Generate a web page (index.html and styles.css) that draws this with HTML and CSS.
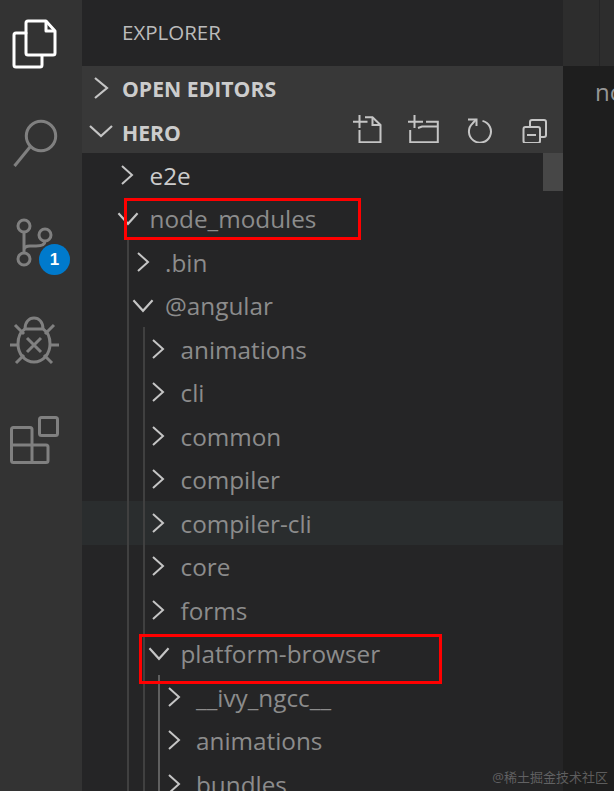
FILE: index.html
```html
<!DOCTYPE html>
<html lang="en">
<head>
    <meta charset="UTF-8">
    <meta name="viewport" content="width=device-width, initial-scale=1.0">
    <title>Explorer</title>
    <link rel="stylesheet" href="styles.css">
</head>
<body>
    <div class="window">
        <!-- Activity bar -->
        <nav class="activity">
            <svg class="act-icon act-files" viewBox="0 0 46 50" fill="none" stroke-linejoin="round" stroke-linecap="round">
                <path d="M14 14H4a2 2 0 0 0-2 2v30a2 2 0 0 0 2 2h24a2 2 0 0 0 2-2v-9"/>
                <path d="M16 2h18l9 10v22a2 2 0 0 1-2 2H16a2 2 0 0 1-2-2V4a2 2 0 0 1 2-2z"/>
                <path d="M34 3v9h8"/>
            </svg>
            <svg class="act-icon act-search" viewBox="0 0 48 50" fill="none">
                <circle cx="29" cy="18" r="14.7"/>
                <path d="M18 29 2.5 48"/>
            </svg>
            <div class="act-scm">
                <svg class="act-icon" viewBox="0 0 40 50" fill="none">
                    <circle cx="8" cy="8" r="6"/>
                    <circle cx="8" cy="41" r="6"/>
                    <circle cx="29" cy="17" r="6"/>
                    <path d="M8 14v21M8 32c0-3 2-4 6-4h6c5 0 9-1 9-5"/>
                </svg>
                <span class="badge">1</span>
            </div>
            <svg class="act-icon act-debug" viewBox="0 0 50 50" fill="none">
                <path d="M15 13C15 6 19 2 24 2s9 4 9 11"/>
                <path d="M15 13h18c5 3 7 9 7 15 0 10-7 18-16 18S8 38 8 28c0-6 2-12 7-15z"/>
                <path d="M17 22l14 14M31 22 17 36"/>
                <path d="M5 9l9 9M44 9l-9 9M0 29h8M40 29h9M6 47l8-8M42 47l-8-8"/>
            </svg>
            <svg class="act-icon act-ext" viewBox="0 0 50 50" fill="none" stroke-linejoin="round">
                <rect x="29.5" y="2.5" width="18" height="18" rx="2"/>
                <path d="M22 47.5V14.5a2 2 0 0 0-2-2H3.5a2 2 0 0 0-2 2v31a2 2 0 0 0 2 2H36a2 2 0 0 0 2-2V32a2 2 0 0 0-2-2H2"/>
            </svg>
        </nav>

        <!-- Sidebar -->
        <aside class="sidebar">
            <div class="side-title">EXPLORER</div>
            <div class="section section-closed">
                <svg class="chev-head" viewBox="0 0 16 24"><path d="M2 2l12 10-12 10"/></svg>
                <span class="section-name">OPEN EDITORS</span>
            </div>
            <div class="section section-open">
                <svg class="chev-head" viewBox="0 0 24 16"><path d="M1 3l11 10 11-10"/></svg>
                <span class="section-name">HERO</span>
                <div class="actions">
                    <span class="action"><svg viewBox="0 0 30 28" fill="none"><path d="M1 6.700h14.500M7.500 0v13M7.500 15v12.300h21V10L20.500 2.300H13"/><path d="M20.500 2.500V10h8"/></svg></span>
                    <span class="action"><svg viewBox="0 0 32 28" fill="none"><path d="M1 6.700h15M7.500 0v13M3.200 15v12.300h27.600V6.700H19M11 13l4-1.500h15.800"/></svg></span>
                    <span class="action"><svg viewBox="0 0 26 28" fill="none"><path d="M16.500 5.900A11 11 0 1 1 6.500 8.500L10 4.500"/><path d="M2 4.500h8.500V11"/></svg></span>
                    <span class="action"><svg viewBox="0 0 26 28" fill="none"><path d="M8 11V7a2 2 0 0 1 2-2h12a2 2 0 0 1 2 2v13a2 2 0 0 1-2 2h-4"/><rect x="1.500" y="12" width="16.500" height="16" rx="2"/><path d="M5 20h9"/></svg></span>
                </div>
            </div>

            <div class="tree">
                <div class="row bright"><svg class="chev" viewBox="0 0 16 24"><path d="M3 3l10 9-10 9"/></svg><span class="name">e2e</span></div>
                <div class="row"><svg class="chev chev-open" viewBox="0 0 24 16"><path d="M3 3l9 10 9-10"/></svg><span class="name">node_modules</span></div>
                <div class="row"><span class="guide"></span><svg class="chev" viewBox="0 0 16 24"><path d="M3 3l10 9-10 9"/></svg><span class="name">.bin</span></div>
                <div class="row"><span class="guide"></span><svg class="chev chev-open" viewBox="0 0 24 16"><path d="M3 3l9 10 9-10"/></svg><span class="name">@angular</span></div>
                <div class="row"><span class="guide"></span><span class="guide"></span><svg class="chev" viewBox="0 0 16 24"><path d="M3 3l10 9-10 9"/></svg><span class="name">animations</span></div>
                <div class="row"><span class="guide"></span><span class="guide"></span><svg class="chev" viewBox="0 0 16 24"><path d="M3 3l10 9-10 9"/></svg><span class="name">cli</span></div>
                <div class="row"><span class="guide"></span><span class="guide"></span><svg class="chev" viewBox="0 0 16 24"><path d="M3 3l10 9-10 9"/></svg><span class="name">common</span></div>
                <div class="row"><span class="guide"></span><span class="guide"></span><svg class="chev" viewBox="0 0 16 24"><path d="M3 3l10 9-10 9"/></svg><span class="name">compiler</span></div>
                <div class="row hover"><span class="guide"></span><span class="guide"></span><svg class="chev" viewBox="0 0 16 24"><path d="M3 3l10 9-10 9"/></svg><span class="name">compiler-cli</span></div>
                <div class="row"><span class="guide"></span><span class="guide"></span><svg class="chev" viewBox="0 0 16 24"><path d="M3 3l10 9-10 9"/></svg><span class="name">core</span></div>
                <div class="row"><span class="guide"></span><span class="guide"></span><svg class="chev" viewBox="0 0 16 24"><path d="M3 3l10 9-10 9"/></svg><span class="name">forms</span></div>
                <div class="row"><span class="guide"></span><span class="guide"></span><svg class="chev chev-open" viewBox="0 0 24 16"><path d="M3 3l9 10 9-10"/></svg><span class="name">platform-browser</span></div>
                <div class="row"><span class="guide"></span><span class="guide"></span><span class="guide guide-active"></span><svg class="chev" viewBox="0 0 16 24"><path d="M3 3l10 9-10 9"/></svg><span class="name">__ivy_ngcc__</span></div>
                <div class="row"><span class="guide"></span><span class="guide"></span><span class="guide guide-active"></span><svg class="chev" viewBox="0 0 16 24"><path d="M3 3l10 9-10 9"/></svg><span class="name">animations</span></div>
                <div class="row"><span class="guide"></span><span class="guide"></span><span class="guide guide-active"></span><svg class="chev" viewBox="0 0 16 24"><path d="M3 3l10 9-10 9"/></svg><span class="name">bundles</span></div>
                <div class="mark mark-node"></div>
                <div class="mark mark-platform"></div>
                <div class="scrollbar"></div>
            </div>
        </aside>

        <!-- Editor -->
        <main class="editor">
            <div class="tabs"><div class="tab"></div></div>
            <div class="crumb">no</div>
        </main>
    </div>
    <div class="watermark">@稀土掘金技术社区</div>
</body>
</html>
```

FILE: styles.css
```css
html, body {
    margin: 0;
    padding: 0;
    height: 100%;
    overflow: hidden;
}
body {
    font-family: "Open Sans", "Noto Sans CJK SC", sans-serif;
    background-color: #252526;
}
.window {
    display: flex;
    width: 614px;
    height: 791px;
    overflow: hidden;
}

/* Activity bar */
.activity {
    flex: 0 0 82px;
    background-color: #333333;
    display: flex;
    flex-direction: column;
    align-items: flex-start;
}
.act-icon {
    display: block;
    flex: none;
    stroke: #808080;
    stroke-width: 3;
}
.act-files {
    width: 46px;
    height: 50px;
    margin: 19px 0 0 12px;
    stroke: #ffffff;
}
.act-search {
    width: 48px;
    height: 50px;
    margin: 49px 0 0 12px;
}
.act-scm {
    position: relative;
    flex: none;
    margin: 50px 0 0 16px;
    width: 40px;
    height: 50px;
}
.act-scm .act-icon {
    width: 40px;
    height: 50px;
}
.badge {
    position: absolute;
    left: 23px;
    top: 26px;
    width: 31px;
    height: 31px;
    border-radius: 50%;
    background-color: #007acc;
    color: #ffffff;
    font-family: "Liberation Sans", sans-serif;
    font-size: 17px;
    font-weight: bold;
    line-height: 31px;
    text-align: center;
}
.act-debug {
    width: 50px;
    height: 50px;
    margin: 48px 0 0 10px;
}
.act-ext {
    width: 50px;
    height: 50px;
    margin: 49px 0 0 10px;
}

/* Sidebar */
.sidebar {
    flex: 0 0 481px;
    background-color: #252526;
    display: flex;
    flex-direction: column;
}
.side-title {
    height: 66px;
    line-height: 64px;
    padding-left: 40px;
    font-size: 20.5px;
    color: #bbbbbb;
    flex: none;
}
.section {
    height: 43.5px;
    background-color: #383838;
    color: #cccccc;
    font-size: 21.2px;
    font-weight: bold;
    display: flex;
    align-items: center;
    flex: none;
}
.section-name {
    padding-top: 2px;
}
.chev-head {
    display: block;
    flex: none;
    fill: none;
    stroke: #c5c5c5;
    stroke-width: 2.2;
}
.section-closed {
    padding-left: 11px;
}
.section-closed .chev-head {
    width: 16px;
    height: 24px;
    margin-right: 13px;
}
.section-open {
    padding-left: 7px;
}
.section-open .chev-head {
    width: 24px;
    height: 16px;
    margin-right: 9px;
}
.actions {
    margin-left: auto;
    align-self: flex-start;
    display: flex;
    padding-top: 5.5px;
}
.action {
    display: flex;
    justify-content: center;
    width: 56px;
}
.action svg {
    display: block;
    height: 28px;
    stroke: #c5c5c5;
    stroke-width: 2;
}

/* Tree */
.tree {
    position: relative;
    flex: 1;
    overflow: hidden;
}
.row {
    height: 43.5px;
    display: flex;
    align-items: center;
    padding-left: 37px;
    font-size: 24.3px;
    color: #8c8c8c;
}
.bright {
    color: #cccccc;
}
.hover {
    background-color: #2a2d2e;
}
.guide {
    display: block;
    width: 15.5px;
    height: 100%;
    flex: none;
    box-sizing: border-box;
    border-left: 2px solid #404040;
    margin-left: 8px;
    margin-right: -8px;
}
.guide-active {
    border-left-color: #5f5f5f;
}
.chev {
    display: block;
    flex: none;
    fill: none;
    stroke: #c5c5c5;
    stroke-width: 2;
    width: 16px;
    height: 24px;
}
.chev-open {
    width: 26px;
    height: 17px;
    margin-left: -4.5px;
    margin-right: -5.5px;
}
.name {
    margin-left: 14.5px;
    padding-top: 1px;
    white-space: nowrap;
}
.mark {
    position: absolute;
    border: 3px solid #ff0000;
    box-sizing: border-box;
}
.mark-node {
    left: 42px;
    top: 45px;
    width: 237px;
    height: 42px;
}
.mark-platform {
    left: 57px;
    top: 481px;
    width: 303px;
    height: 50px;
}
.scrollbar {
    position: absolute;
    right: 0;
    top: 0;
    width: 20px;
    height: 38px;
    background-color: #474747;
}

/* Editor */
.editor {
    flex: 1;
    background-color: #1e1e1e;
    overflow: hidden;
}
.tabs {
    height: 66px;
    background-color: #2d2d2d;
}
.tab {
    width: 36px;
    height: 66px;
    border-right: 1px solid #252526;
}
.crumb {
    padding: 9px 0 0 32px;
    font-size: 24px;
    color: #969696;
}
.watermark {
    position: absolute;
    right: 6px;
    bottom: 5px;
    font-size: 13px;
    color: rgba(255, 255, 255, 0.28);
}
```
